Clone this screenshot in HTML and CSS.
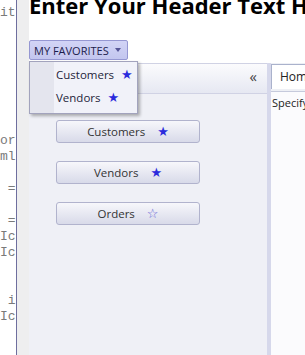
FILE: index.html
```html
<!DOCTYPE html>
<html lang="en">
<head>
    <meta charset="UTF-8">
    <meta name="viewport" content="width=device-width, initial-scale=1.0">
    <title>Favorites</title>
    <link rel="stylesheet" href="styles.css">
</head>
<body>
<div class="editor">
    <pre class="gutter">it







or
ml

 =

 =
Ic
Ic


 i
Ic



</pre>
    <div class="app">
        <div class="page">
            <h1 class="title">Enter Your Header Text Here</h1>
            <div class="favorites">
                <button class="fav-btn">MY FAVORITES <span class="caret"></span></button>
                <ul class="fav-menu">
                    <li>Customers <span class="star">&#9733;</span></li>
                    <li>Vendors <span class="star">&#9733;</span></li>
                </ul>
            </div>
            <div class="workspace">
                <div class="sidebar">
                    <div class="sidebar-head"><span class="collapse">&laquo;</span></div>
                    <div class="sidebar-body">
                        <button class="nav-btn">Customers <span class="star">&#9733;</span></button>
                        <button class="nav-btn">Vendors <span class="star">&#9733;</span></button>
                        <button class="nav-btn">Orders <span class="star empty">&#9734;</span></button>
                    </div>
                </div>
                <div class="content">
                    <div class="tabs"><span class="tab">Home</span></div>
                    <div class="tab-body">Specify the details</div>
                </div>
            </div>
        </div>
    </div>
</div>
</body>
</html>
```

FILE: styles.css
```css
html, body {
    margin: 0;
    padding: 0;
    height: 100%;
    overflow: hidden;
    background-color: #fff;
}
.editor {
    display: flex;
    height: 355px;
    width: 305px;
    overflow: hidden;
}
.gutter {
    flex: 0 0 16px;
    margin: 0;
    padding-top: 5px;
    overflow: hidden;
    font-family: "Liberation Mono", monospace;
    font-size: 13px;
    line-height: 16px;
    color: #7a7a7a;
    border-right: 1px solid #6e6e9e;
}
.app {
    flex: 1;
    min-width: 0;
    padding-left: 12px;
    background-color: #eeeeef;
    overflow: hidden;
}
.page {
    width: 400px;
    height: 100%;
    background-color: #fff;
    display: flex;
    flex-direction: column;
    font-family: "Open Sans", sans-serif;
}
.title {
    margin: -9px 0 0 0;
    height: 29px;
    font-family: "Open Sans", sans-serif;
    font-size: 22px;
    line-height: 28px;
    font-weight: bold;
    color: #000;
    white-space: nowrap;
}
.favorites {
    position: relative;
    margin-top: 20px;
    height: 23px;
}
.fav-btn {
    display: flex;
    align-items: center;
    gap: 6px;
    width: 99px;
    height: 20px;
    padding: 0 0 0 4px;
    font-family: "Open Sans", sans-serif;
    font-size: 11px;
    color: #1c1c4c;
    background: linear-gradient(#d2d4f6, #c3c6ef);
    border: 1px solid #9597d2;
    border-radius: 2px;
}
.caret {
    width: 0;
    height: 0;
    border-left: 3px solid transparent;
    border-right: 3px solid transparent;
    border-top: 4px solid #555596;
}
.fav-menu {
    position: absolute;
    top: 21px;
    left: 0;
    z-index: 2;
    width: 107px;
    margin: 0;
    padding: 2px 0 3px 0;
    list-style: none;
    background: linear-gradient(to right, #e4e5ee 24px, #f1f2f9 24px);
    border: 1px solid #a2a3bd;
    box-shadow: 2px 2px 3px rgba(0, 0, 0, 0.3);
}
.fav-menu li {
    height: 23px;
    line-height: 22px;
    padding-left: 26px;
    font-size: 11.5px;
    color: #1e1e3a;
}
.fav-menu .star {
    margin-left: 4px;
}
.star {
    color: #2b2bdc;
    font-family: "DejaVu Sans", sans-serif;
    font-size: 13px;
}
.star.empty {
    color: #6464d6;
}
.workspace {
    display: flex;
    flex: 1;
}
.sidebar {
    width: 238px;
    background-color: #eff0f6;
    border-right: 4px solid #d6d8eb;
}
.sidebar-head {
    height: 23px;
    display: flex;
    align-items: center;
    justify-content: flex-end;
    padding: 0 10px 6px 0;
    background: linear-gradient(#fbfbfd, #e6e8f2);
    border-top: 1px solid #d0d2e4;
    border-bottom: 1px solid #d0d2e4;
}
.collapse {
    font-size: 15px;
    color: #444;
}
.sidebar-body {
    display: flex;
    flex-direction: column;
    gap: 18px;
    padding: 26px 0 0 27px;
}
.nav-btn {
    width: 144px;
    height: 23px;
    padding: 0;
    font-family: "Open Sans", sans-serif;
    font-size: 11.5px;
    color: #333;
    background: linear-gradient(#f7f7fb, #d8dae9);
    border: 1px solid #b1b3cd;
    border-radius: 3px;
}
.nav-btn .star {
    margin-left: 9px;
}
.content {
    flex: 1;
    background-color: #fbfbfd;
}
.tabs {
    height: 27px;
    padding-top: 1px;
    background-color: #eef0f5;
    border-bottom: 1px solid #c6cadc;
}
.tab {
    display: inline-block;
    height: 24px;
    line-height: 24px;
    padding: 0 8px;
    font-size: 12px;
    color: #222;
    background-color: #fff;
    border: 1px solid #aab2cc;
    border-bottom: none;
}
.tab-body {
    padding: 3px 1px;
    font-size: 11px;
    color: #222;
}
```
